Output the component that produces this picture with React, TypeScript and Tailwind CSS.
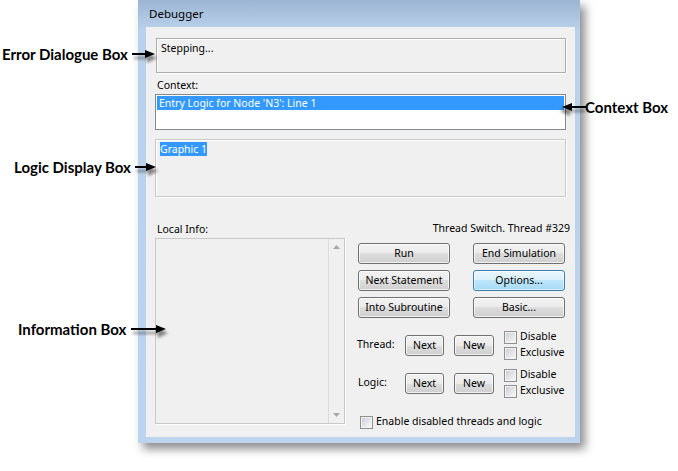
const ui = "font-['Noto_Sans',sans-serif] text-[10.5px] text-black";

function Button({ label, focus, w }: { label: string; focus?: boolean; w: string }) {
  return (
    <button
      className={`${w} h-[21px] rounded-[3px] border leading-none ${
        focus
          ? "border-[#3c7fb1] bg-[linear-gradient(to_bottom,#eaf6fd_0%,#d9f0fc_50%,#bee6fd_50%,#a7d9f5_100%)] shadow-[inset_0_0_0_1px_rgba(255,255,255,0.6)]"
          : "border-[#707070] bg-[linear-gradient(to_bottom,#f2f2f2_0%,#ebebeb_50%,#dddddd_50%,#cfcfcf_100%)] shadow-[inset_0_0_0_1px_rgba(255,255,255,0.7)]"
      }`}
    >
      {label}
    </button>
  );
}

function Check({ label }: { label: string }) {
  return (
    <div className="flex h-[16px] items-center gap-[3px]">
      <span className="h-[13px] w-[13px] shrink-0 border border-[#8e8f8f] bg-[#f4f4f4] p-[1px]">
        <span className="block h-full w-full bg-[linear-gradient(135deg,#cbcfd5,#f7f7f7)]" />
      </span>
      <span>{label}</span>
    </div>
  );
}

function Arrow({ dir = "right", w = 26 }: { dir?: "right" | "left"; w?: number }) {
  return (
    <svg width={w + 8} height={18} viewBox={`0 0 ${w + 8} 18`} className="overflow-visible">
      <defs>
        <filter id={`sh-${dir}-${w}`} x="-20%" y="-50%" width="150%" height="250%">
          <feGaussianBlur stdDeviation="1.6" />
        </filter>
      </defs>
      <g transform={dir === "left" ? `translate(${w + 8} 0) scale(-1 1)` : undefined}>
        <g opacity="0.45" filter={`url(#sh-${dir}-${w})`} transform="translate(2 4)">
          <line x1="1" y1="7" x2={w - 6} y2="7" stroke="#000" strokeWidth="2" />
          <polygon points={`${w - 8},2 ${w + 2},7 ${w - 8},12`} fill="#000" />
        </g>
        <line x1="1" y1="7" x2={w - 6} y2="7" stroke="#000" strokeWidth="2" />
        <polygon points={`${w - 8},3 ${w + 2},7 ${w - 8},11`} fill="#000" />
      </g>
    </svg>
  );
}

const note = "font-['Lato',sans-serif] font-bold text-[15px] text-black whitespace-nowrap";

export default function App() {
  return (
    <div className="relative h-[471px] w-[678px] overflow-hidden bg-white">
      {/* window */}
      <div className="ml-[138px] w-[442px] bg-[linear-gradient(to_bottom,#9cb5d3_0px,#b9d1ea_30px,#bcd4ee_100%)] pb-[6px] shadow-[5px_6px_9px_rgba(0,0,0,0.45)]">
        <div className={`${ui} flex h-[27px] items-center pl-[11px] text-[11.5px]`}>Debugger</div>
        <div className={`${ui} ml-[8px] flex h-[410px] w-[429px] flex-col bg-[#f0f0f0] pl-[9px] pr-[9px] pt-[11px]`}>
          {/* error box */}
          <div className="ml-[1px] h-[35px] border border-[#acacac] px-[4px] pt-[2px] shadow-[1px_1px_0_#fff,inset_1px_1px_0_#fff]">
            Stepping...
          </div>
          <div className="mt-[3px] h-[18px] pl-[2px] leading-[18px]">Context:</div>
          {/* context list */}
          <div className="h-[36px] border border-[#828790] bg-white p-[1px]">
            <div className="h-[14px] bg-[#3399ff] pl-[2px] leading-[14px] text-white">
              Entry Logic for Node 'N3': Line 1
            </div>
          </div>
          {/* logic display */}
          <div className="mt-[9px] h-[58px] border border-[#c8c8c8] px-[4px] pt-[2px] shadow-[1px_1px_0_#fff,inset_1px_1px_0_#fff]">
            <span className="bg-[#3399ff] text-white">Graphic 1</span>
          </div>
          {/* lower area */}
          <div className="mt-[23px] flex">
            <div className="flex w-[190px] flex-col">
              <div className="h-[18px] pl-[2px] leading-[18px]">Local Info:</div>
              <div className="flex h-[186px] border border-[#c8c8c8] shadow-[1px_1px_0_#fff]">
                <div className="flex-1" />
                <div className="flex w-[16px] flex-col items-center justify-between border-l border-[#dcdcdc] py-[6px]">
                  <svg width="7" height="4" viewBox="0 0 7 4">
                    <polygon points="0,4 3.5,0 7,4" fill="#a8a8a8" />
                  </svg>
                  <svg width="7" height="4" viewBox="0 0 7 4">
                    <polygon points="0,0 3.5,4 7,0" fill="#a8a8a8" />
                  </svg>
                </div>
              </div>
            </div>
            <div className="ml-[10px] flex flex-1 flex-col">
              <div className="-mr-[4px] h-[18px] text-right leading-[16px]">Thread Switch. Thread #329</div>
              <div className="ml-[3px] mt-[5px] grid grid-cols-[92px_92px] gap-x-[23px] gap-y-[6px]">
                <Button label="Run" w="w-[92px]" />
                <Button label="End Simulation" w="w-[92px]" />
                <Button label="Next Statement" w="w-[92px]" />
                <Button label="Options..." w="w-[92px]" focus />
                <Button label="Into Subroutine" w="w-[92px]" />
                <Button label="Basic..." w="w-[92px]" />
              </div>
              <div className="ml-[2px] mt-[11px] flex items-center">
                <span className="w-[48px]">Thread:</span>
                <Button label="Next" w="w-[39px]" />
                <span className="w-[10px]" />
                <Button label="New" w="w-[40px]" />
                <div className="ml-[10px] flex flex-col">
                  <Check label="Disable" />
                  <Check label="Exclusive" />
                </div>
              </div>
              <div className="ml-[3px] mt-[6px] flex items-center">
                <span className="w-[47px]">Logic:</span>
                <Button label="Next" w="w-[39px]" />
                <span className="w-[10px]" />
                <Button label="New" w="w-[40px]" />
                <div className="ml-[10px] flex flex-col">
                  <Check label="Disable" />
                  <Check label="Exclusive" />
                </div>
              </div>
              <div className="ml-[5px] mt-[15px]">
                <Check label="Enable disabled threads and logic" />
              </div>
            </div>
          </div>
        </div>
      </div>

      {/* annotations */}
      <div className="absolute left-[2px] top-[43px] flex items-center">
        <span className={note}>Error Dialogue Box</span>
        <span className="ml-[3px] mt-[3px]">
          <Arrow w={22} />
        </span>
      </div>
      <div className="absolute left-[14px] top-[156px] flex items-center">
        <span className={note}>Logic Display Box</span>
        <span className="ml-[3px] mt-[3px]">
          <Arrow w={20} />
        </span>
      </div>
      <div className="absolute left-[18px] top-[318px] flex items-center">
        <span className={note}>Information Box</span>
        <span className="ml-[4px] mt-[3px]">
          <Arrow w={34} />
        </span>
      </div>
      <div className="absolute left-[556px] top-[96px] flex items-center">
        <span className="mt-[3px]">
          <Arrow dir="left" w={24} />
        </span>
        <span className={`${note} -ml-[3px]`}>Context Box</span>
      </div>
    </div>
  );
}
